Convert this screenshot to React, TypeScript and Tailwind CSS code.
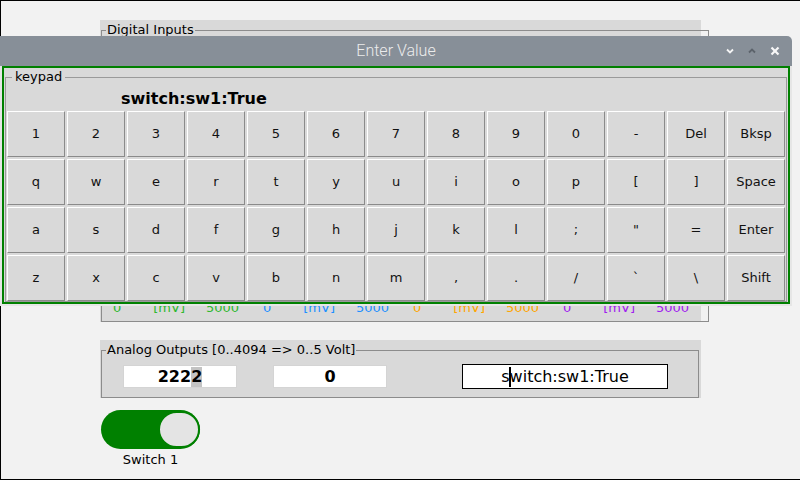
import React from "react";

const keys: string[][] = [
  ["1", "2", "3", "4", "5", "6", "7", "8", "9", "0", "-", "Del", "Bksp"],
  ["q", "w", "e", "r", "t", "y", "u", "i", "o", "p", "[", "]", "Space"],
  ["a", "s", "d", "f", "g", "h", "j", "k", "l", ";", '"', "=", "Enter"],
  ["z", "x", "c", "v", "b", "n", "m", ",", ".", "/", "`", "\\", "Shift"],
];

const scales = [
  { color: "text-[#2fb82f]" },
  { color: "text-[#1e90ff]" },
  { color: "text-[#ffa500]" },
  { color: "text-[#a020f0]" },
];

function ScaleCol({ color }: { color: string }) {
  return (
    <div className={`w-[150px] flex text-[13px] leading-[16px] ${color}`}>
      <span className="ml-[5px]">0</span>
      <span className="ml-[32px]">[mV]</span>
      <span className="ml-[21px]">5000</span>
    </div>
  );
}

export default function App() {
  return (
    <div className="relative w-[800px] h-[480px] overflow-hidden font-['DejaVu_Sans',sans-serif] text-black">
      {/* background application */}
      <div className="w-[800px] h-[480px] bg-[#f2f2f2] border-l border-t border-b border-black flex flex-col">
        {/* Digital Inputs */}
        <div className="ml-[99px] mt-[19px] w-[601px] h-[302px] bg-[#d9d9d9] pt-[2px] px-[1px]">
          <fieldset className="h-[300px] border border-[#8c8c8c] flex flex-col justify-end pb-[5px]">
            <legend className="ml-[4px] px-[1px] text-[13px] leading-[16px]">Digital Inputs</legend>
            <div className="flex pl-[6px]">
              {scales.map((s, i) => (
                <ScaleCol key={i} color={s.color} />
              ))}
            </div>
          </fieldset>
        </div>

        {/* Analog Outputs */}
        <div className="ml-[99px] mt-[18px] w-[601px] h-[58px] bg-[#d9d9d9] pt-[2px] pl-[1px] pr-[2px]">
          <fieldset className="h-[56px] border border-[#8c8c8c]">
            <legend className="ml-[4px] px-[1px] text-[13px] leading-[16px]">
              Analog Outputs [0..4094 =&gt; 0..5 Volt]
            </legend>
            <div className="flex items-center h-[25px] mt-[6px]">
              <div className="ml-[21px] w-[114px] h-[23px] bg-white border border-[#d4d4d4] flex items-center justify-center text-[16px] font-bold leading-[20px]">
                <span>222</span>
                <span className="bg-[#c3c3c3]">2</span>
              </div>
              <div className="ml-[36px] w-[114px] h-[23px] bg-white border border-[#d4d4d4] flex items-center justify-center text-[16px] font-bold leading-[20px]">
                0
              </div>
              <div className="ml-[75px] w-[206px] h-[25px] bg-white border border-black flex items-center justify-center text-[16px] leading-[20px]">
                <span>s</span>
                <span className="inline-block w-[2px] h-[20px] bg-black -mx-[1px]"></span>
                <span>witch:sw1:True</span>
              </div>
            </div>
          </fieldset>
        </div>

        {/* Switch */}
        <div className="ml-[100px] mt-[12px] w-[99px] flex flex-col items-center">
          <div className="w-[99px] h-[39px] rounded-full bg-[#008000] flex items-center justify-end">
            <div className="w-[42px] h-[37px] rounded-full bg-[#e4e4e4] border-2 border-[#008000]"></div>
          </div>
          <div className="mt-[3px] text-[13px] leading-[16px]">Switch 1</div>
        </div>
      </div>

      {/* Enter Value dialog (overlay window) */}
      <div className="absolute left-0 top-[36px] w-[792px] flex flex-col">
        <div className="relative h-[30px] bg-[#878f98] rounded-tr-[5px] flex items-center justify-center">
          <span className="font-['Roboto',sans-serif] font-light text-[16px] text-[#ececec] leading-[20px]">
            Enter Value
          </span>
          <div className="absolute right-[12px] top-0 h-[30px] flex items-center gap-[14px]">
            <svg width="8" height="6" viewBox="0 0 8 6">
              <polyline points="1,1.5 4,4.5 7,1.5" fill="none" stroke="#f4f4f4" strokeWidth="1.8" />
            </svg>
            <svg width="8" height="6" viewBox="0 0 8 6">
              <polyline points="1,4.5 4,1.5 7,4.5" fill="none" stroke="#5c636b" strokeWidth="1.8" />
            </svg>
            <svg width="10" height="10" viewBox="0 0 10 10">
              <line x1="1.5" y1="1.5" x2="8.5" y2="8.5" stroke="#f8f8f8" strokeWidth="2.2" />
              <line x1="8.5" y1="1.5" x2="1.5" y2="8.5" stroke="#f8f8f8" strokeWidth="2.2" />
            </svg>
          </div>
        </div>
        <div className="bg-[#e6e6e6] px-[2px] pb-[2px]">
          <div className="h-[238px] border-2 border-[#008000] bg-[#d9d9d9] pt-[1px] pl-[1px] pr-[1px]">
            <fieldset className="h-[233px] border border-[#9a9a9a] pl-[1px]">
              <legend className="ml-[5px] px-[3px] text-[13px] leading-[16px]">keypad</legend>
              <div className="mt-[4px] h-[19px] pl-[114px] text-[16px] font-bold leading-[19px]">
                switch:sw1:True
              </div>
              <div className="mt-[3px] grid grid-cols-[repeat(13,58px)] auto-rows-[46px] gap-[2px]">
                {keys.flat().map((k, i) => (
                  <div
                    key={i}
                    className="bg-[#d9d9d9] border-t border-l border-white border-r border-b border-r-[#8a8a8a] border-b-[#8a8a8a] flex items-center justify-center text-[13px] leading-[16px] text-[#111]"
                  >
                    {k}
                  </div>
                ))}
              </div>
            </fieldset>
          </div>
        </div>
      </div>
    </div>
  );
}
